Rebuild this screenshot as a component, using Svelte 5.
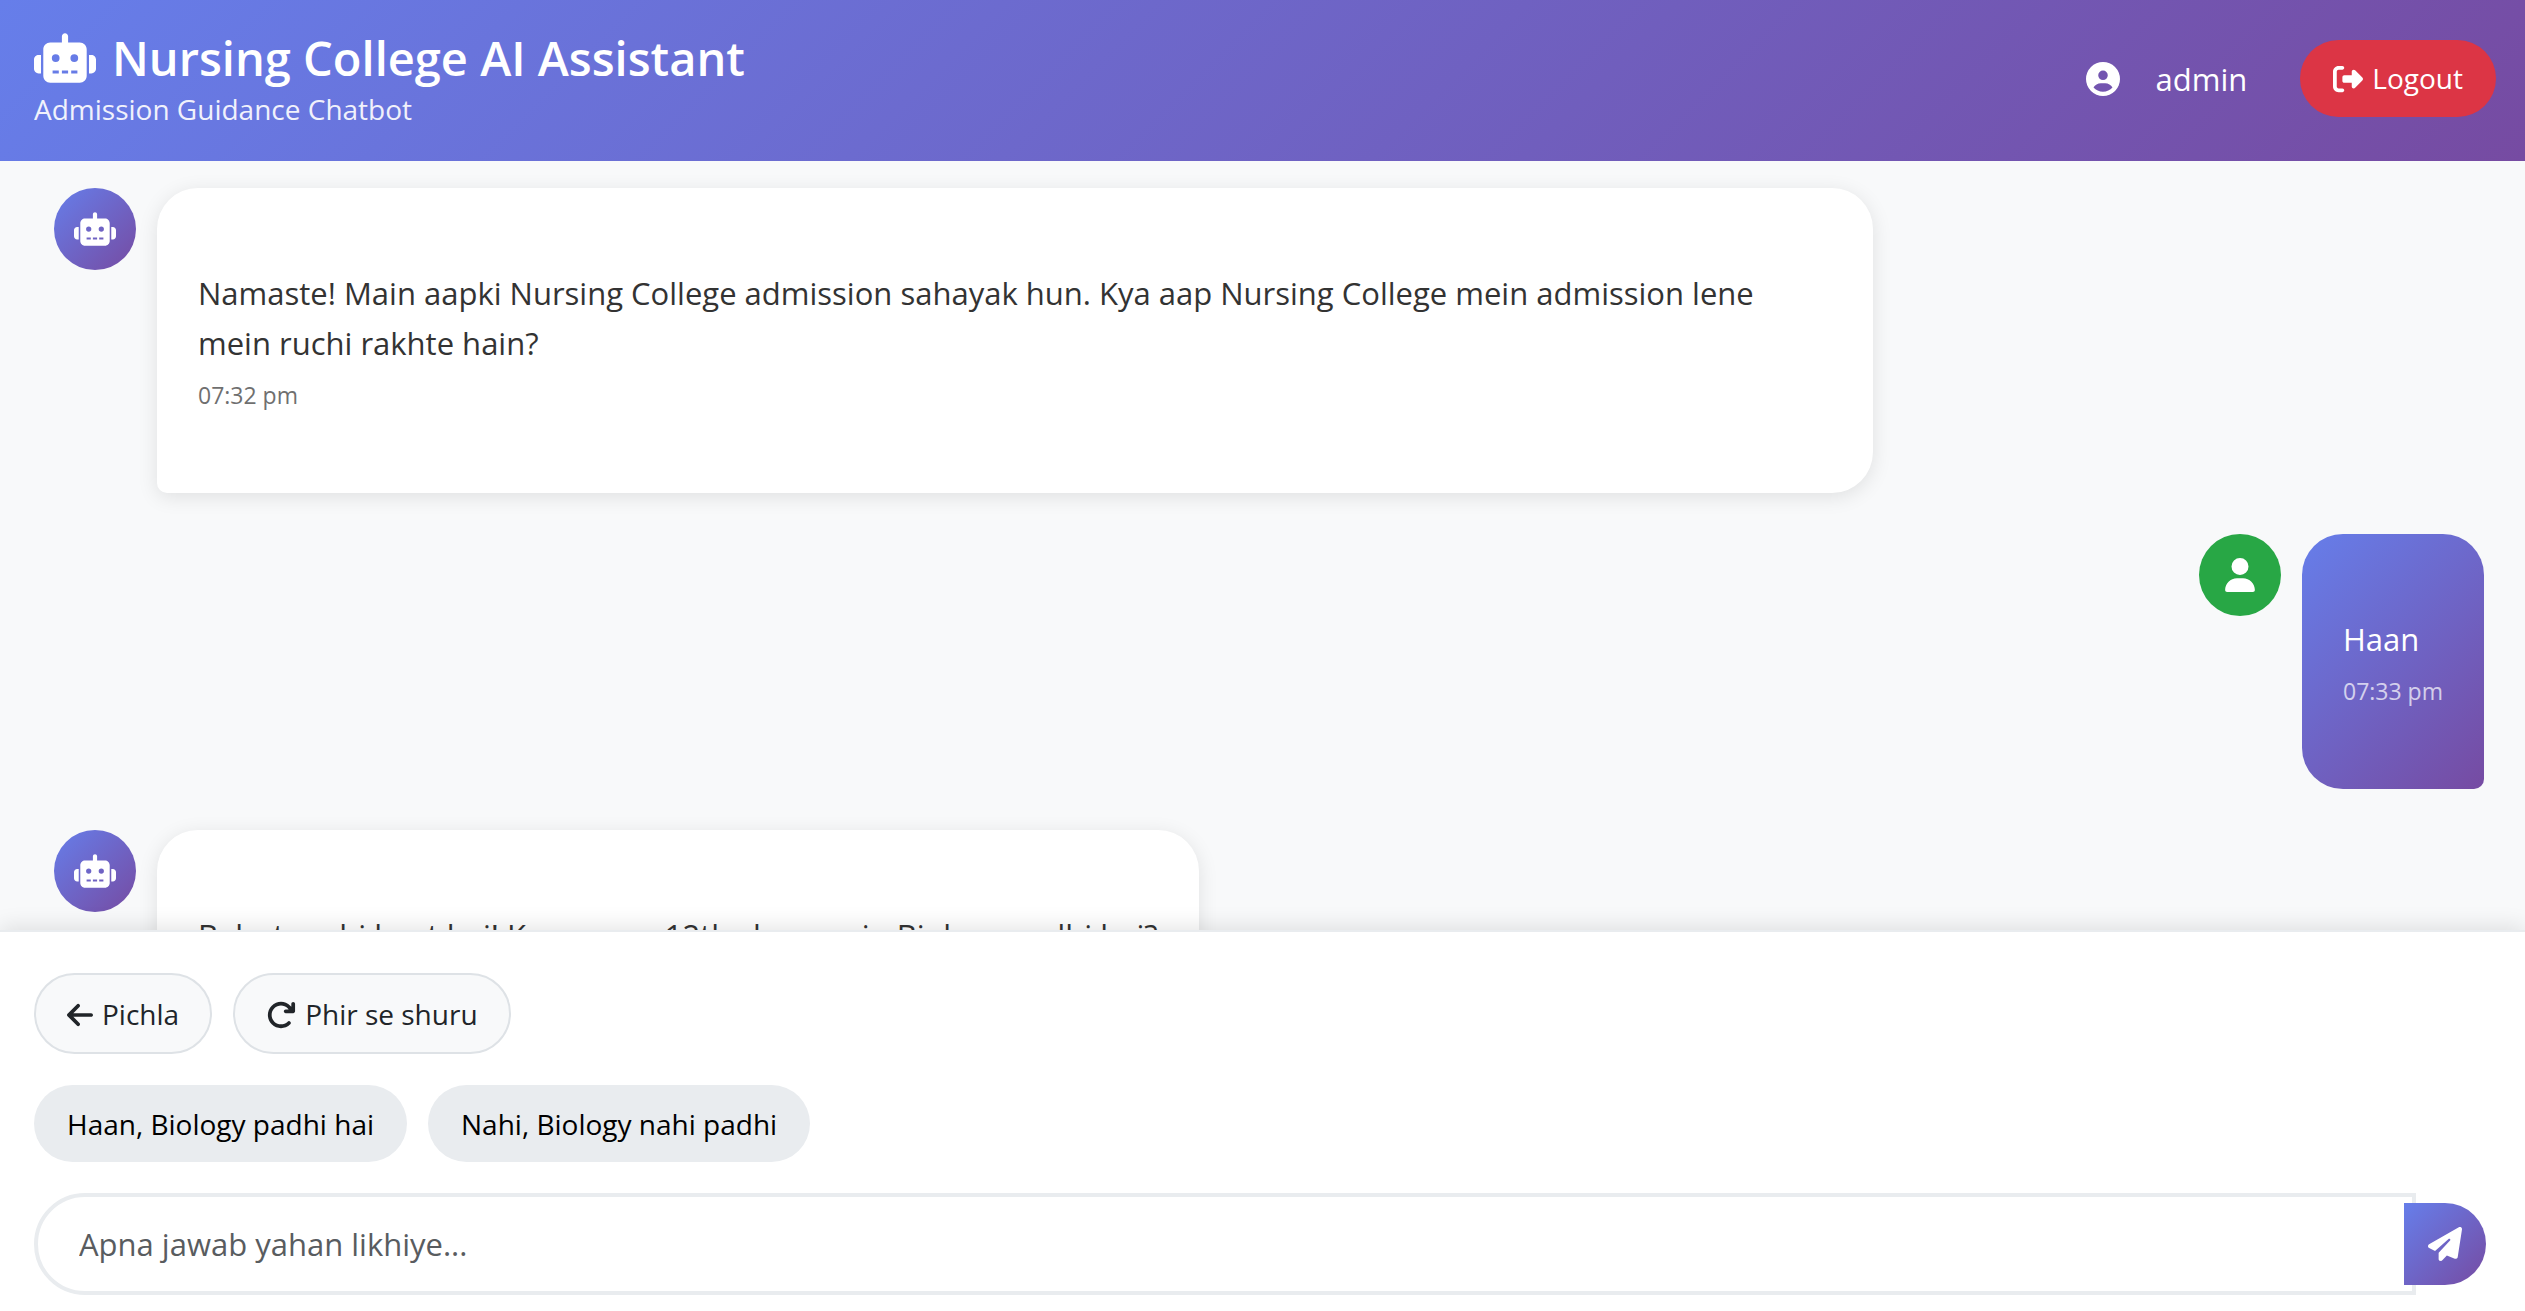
<script lang="ts">
  type Message = { from: 'bot' | 'user'; text: string; time: string };

  const messages: Message[] = [
    {
      from: 'bot',
      text: 'Namaste! Main aapki Nursing College admission sahayak hun. Kya aap Nursing College mein admission lene mein ruchi rakhte hain?',
      time: '07:32 pm',
    },
    { from: 'user', text: 'Haan', time: '07:33 pm' },
    {
      from: 'bot',
      text: 'Bahut acchi baat hai! Kya aapne 12th class mein Biology padhi hai?',
      time: '07:33 pm',
    },
  ];

  const replies = ['Haan, Biology padhi hai', 'Nahi, Biology nahi padhi'];
  let draft = $state('');
</script>

{#snippet robot()}
  <svg class="robot" viewBox="0 0 640 512" aria-hidden="true">
    <path
      d="M320 0c17.700 0 32 14.300 32 32V96H472c39.800 0 72 32.200 72 72V440c0 39.800-32.200 72-72 72H168c-39.800 0-72-32.200-72-72V168c0-39.800 32.200-72 72-72H288V32c0-17.700 14.300-32 32-32zM192 384V416H256V384zM288 384V416H352V384zM384 384V416H448V384zM264 256a40 40 0 1 0 -80 0 40 40 0 1 0 80 0zm152 40a40 40 0 1 0 0-80 40 40 0 1 0 0 80zM48 224H72V416H48c-26.500 0-48-21.500-48-48V272c0-26.500 21.500-48 48-48zm544 0c26.500 0 48 21.500 48 48v96c0 26.500-21.500 48-48 48H568V224h24z"
    />
  </svg>
{/snippet}

<div class="app">
  <header>
    <div class="brand">
      <h1>{@render robot()}<span>Nursing College AI Assistant</span></h1>
      <p>Admission Guidance Chatbot</p>
    </div>
    <div class="account">
      <svg class="user-icon" viewBox="0 0 512 512" aria-hidden="true">
        <path
          d="M399 384.200C376.900 345.800 335.400 320 288 320H224c-47.400 0-88.900 25.800-111 64.200c35.200 39.200 86.200 63.800 143 63.800s107.800-24.700 143-63.800zM0 256a256 256 0 1 1 512 0A256 256 0 1 1 0 256zm256 16a72 72 0 1 0 0-144 72 72 0 1 0 0 144z"
        />
      </svg>
      <span class="name">admin</span>
      <button class="logout" type="button">
        <svg viewBox="0 0 512 512" aria-hidden="true">
          <path
            d="M377.900 105.900L500.700 228.700c7.200 7.200 11.300 17.100 11.300 27.300s-4.100 20.100-11.300 27.300L377.900 406.100c-6.400 6.400-15 9.900-24 9.900c-18.700 0-33.900-15.200-33.900-33.900l0-62.100-128 0c-17.700 0-32-14.300-32-32l0-64c0-17.700 14.300-32 32-32l128 0 0-62.100c0-18.700 15.200-33.900 33.900-33.900c9 0 17.600 3.600 24 9.900zM160 96L96 96c-17.700 0-32 14.300-32 32l0 256c0 17.700 14.300 32 32 32l64 0c17.700 0 32 14.300 32 32s-14.300 32-32 32l-64 0c-53 0-96-43-96-96L0 128C0 75 43 32 96 32l64 0c17.700 0 32 14.300 32 32s-14.300 32-32 32z"
          />
        </svg>
        Logout
      </button>
    </div>
  </header>

  <main>
    {#each messages as message}
      <article class={message.from}>
        <div class="avatar">
          {#if message.from === 'bot'}
            {@render robot()}
          {:else}
            <svg class="person" viewBox="0 0 448 512" aria-hidden="true">
              <path
                d="M224 256A128 128 0 1 0 224 0a128 128 0 1 0 0 256zm-45.700 48C79.800 304 0 383.800 0 482.300C0 498.700 13.300 512 29.700 512H418.300c16.400 0 29.700-13.300 29.700-29.700C448 383.800 368.200 304 269.700 304H178.300z"
              />
            </svg>
          {/if}
        </div>
        <div class="bubble">
          <p>{message.text}</p>
          <time>{message.time}</time>
        </div>
      </article>
    {/each}
  </main>

  <footer>
    <div class="row">
      <button class="nav" type="button">
        <svg class="narrow" viewBox="0 0 448 512" aria-hidden="true">
          <path
            d="M9.400 233.400c-12.500 12.500-12.500 32.800 0 45.300l160 160c12.500 12.500 32.800 12.500 45.300 0s12.500-32.800 0-45.300L109.200 288 416 288c17.700 0 32-14.300 32-32s-14.300-32-32-32l-306.700 0L214.600 118.600c12.500-12.500 12.500-32.800 0-45.300s-32.800-12.500-45.300 0l-160 160z"
          />
        </svg>
        Pichla
      </button>
      <button class="nav" type="button">
        <svg viewBox="0 0 512 512" aria-hidden="true">
          <path
            d="M386.300 160H336c-17.700 0-32 14.300-32 32s14.300 32 32 32H464c17.700 0 32-14.300 32-32V64c0-17.700-14.300-32-32-32s-32 14.300-32 32v51.200L414.400 97.600c-87.500-87.500-229.300-87.500-316.800 0s-87.500 229.300 0 316.800s229.300 87.500 316.800 0c12.500-12.500 12.500-32.800 0-45.300s-32.800-12.500-45.300 0c-62.500 62.500-163.800 62.500-226.300 0s-62.500-163.800 0-226.300s163.800-62.500 226.300 0L386.300 160z"
          />
        </svg>
        Phir se shuru
      </button>
    </div>
    <div class="row">
      {#each replies as reply}
        <button class="reply" type="button" onclick={() => (draft = reply)}>{reply}</button>
      {/each}
    </div>
    <form onsubmit={(event) => event.preventDefault()}>
      <input type="text" aria-label="Apna jawab" placeholder="Apna jawab yahan likhiye..." bind:value={draft} />
      <button class="send" type="submit" aria-label="Send">
        <svg viewBox="0 0 512 512" aria-hidden="true">
          <path
            d="M498.100 5.600c10.100 7 15.400 19.100 13.500 31.200l-64 416c-1.500 9.700-7.400 18.200-16 23s-18.900 5.400-28 1.600L284 427.700l-68.500 74.100c-8.900 9.700-22.900 12.900-35.200 8.100S160 493.200 160 480V396.400c0-4 1.500-7.800 4.200-10.700L331.800 202.800c5.800-6.300 5.600-16-.4-22s-15.700-6.400-22-.7L106 360.800 17.700 316.600C7.100 311.300 .3 300.700 0 288.900s5.900-22.800 16.100-28.700l448-256c10.700-6.100 23.900-5.500 34 1.400z"
          />
        </svg>
      </button>
    </form>
  </footer>
</div>

<style>
  :global(body) {
    margin: 0;
  }

  .app {
    --gradient: linear-gradient(135deg, #667eea 0%, #764ba2 100%);
    display: flex;
    flex-direction: column;
    height: 100vh;
    overflow: hidden;
    background: #f8f9fa;
    color: #333;
    font: 31px/50px 'Open Sans', 'Noto Sans', sans-serif;
  }

  .app :global(*) {
    box-sizing: border-box;
  }

  svg {
    display: block;
    flex: none;
    width: 30px;
    height: 30px;
    fill: currentColor;
  }

  h1,
  p {
    margin: 0;
    font-weight: 400;
  }

  button {
    display: flex;
    align-items: center;
    gap: 9px;
    border: 0;
    border-radius: 41px;
    font: inherit;
    font-size: 28px;
    line-height: 45px;
    white-space: nowrap;
    cursor: pointer;
  }

  header {
    flex: none;
    display: flex;
    justify-content: space-between;
    align-items: flex-start;
    padding: 28px 29px 30px 34px;
    background: var(--gradient);
    color: #fff;
  }

  h1 {
    display: flex;
    align-items: center;
    gap: 16px;
    font-size: 47px;
    font-weight: 600;
    line-height: 60px;
  }

  h1 .robot {
    width: 62px;
    height: 50px;
  }

  .brand p {
    font-size: 28px;
    line-height: 43px;
    opacity: 0.9;
  }

  .account {
    display: flex;
    align-items: center;
    padding-top: 12px;
  }

  .user-icon {
    width: 34px;
    height: 34px;
  }

  .name {
    margin: 0 53px 0 36px;
  }

  .logout {
    padding: 16px 33px;
    background: #dc3545;
    color: #fff;
  }

  main {
    flex: 1;
    min-height: 0;
    overflow: hidden;
    display: flex;
    flex-direction: column;
    gap: 41px;
    padding: 27px 41px 0 54px;
  }

  article {
    flex: none;
    display: flex;
    align-items: flex-start;
    gap: 21px;
  }

  .user {
    justify-content: flex-end;
  }

  .avatar {
    flex: none;
    display: grid;
    place-items: center;
    width: 82px;
    height: 82px;
    border-radius: 50%;
    background: var(--gradient);
    color: #fff;
  }

  .user .avatar {
    background: #28a745;
  }

  .avatar .robot {
    width: 42px;
    height: 34px;
  }

  .avatar .person {
    height: 34px;
  }

  .bubble {
    max-width: 70.6%;
    padding: 80px 41px 78px;
    border-radius: 41px 41px 41px 10px;
    background: #fff;
    box-shadow: 0 4px 20px rgb(0 0 0 / 10%);
  }

  .user .bubble {
    border-radius: 41px 41px 10px 41px;
    background: var(--gradient);
    color: #fff;
    box-shadow: none;
  }

  time {
    display: block;
    margin-top: 8px;
    font-size: 23px;
    line-height: 39px;
    opacity: 0.7;
  }

  footer {
    position: relative;
    flex: none;
    display: flex;
    flex-direction: column;
    padding: 41px 39px 16px 34px;
    border-top: 2px solid #e9ecef;
    background: #fff;
    box-shadow: 0 -4px 20px rgb(0 0 0 / 10%);
  }

  .row {
    display: flex;
    gap: 21px;
    margin-bottom: 31px;
  }

  .nav {
    padding: 17px 31px 15px;
    border: 2px solid #dee2e6;
    background: #f8f9fa;
    color: #212529;
  }

  .nav .narrow {
    width: 26px;
  }

  .reply {
    padding: 17px 33px 15px;
    background: #e9ecef;
    color: #000;
  }

  form {
    display: flex;
    align-items: center;
  }

  input {
    flex: 1;
    min-width: 0;
    height: 102px;
    padding: 0 41px;
    border: 4px solid #e9ecef;
    border-radius: 51px 0 0 51px;
    background: #fff;
    color: #212529;
    font: inherit;
    outline: 0;
  }

  input::placeholder {
    color: #595c5f;
    opacity: 1;
  }

  .send {
    position: relative;
    justify-content: center;
    width: 82px;
    height: 82px;
    margin-left: -12px;
    padding: 0;
    border-radius: 0 41px 41px 0;
    background: var(--gradient);
    color: #fff;
  }

  .send svg {
    width: 34px;
    height: 34px;
  }
</style>
